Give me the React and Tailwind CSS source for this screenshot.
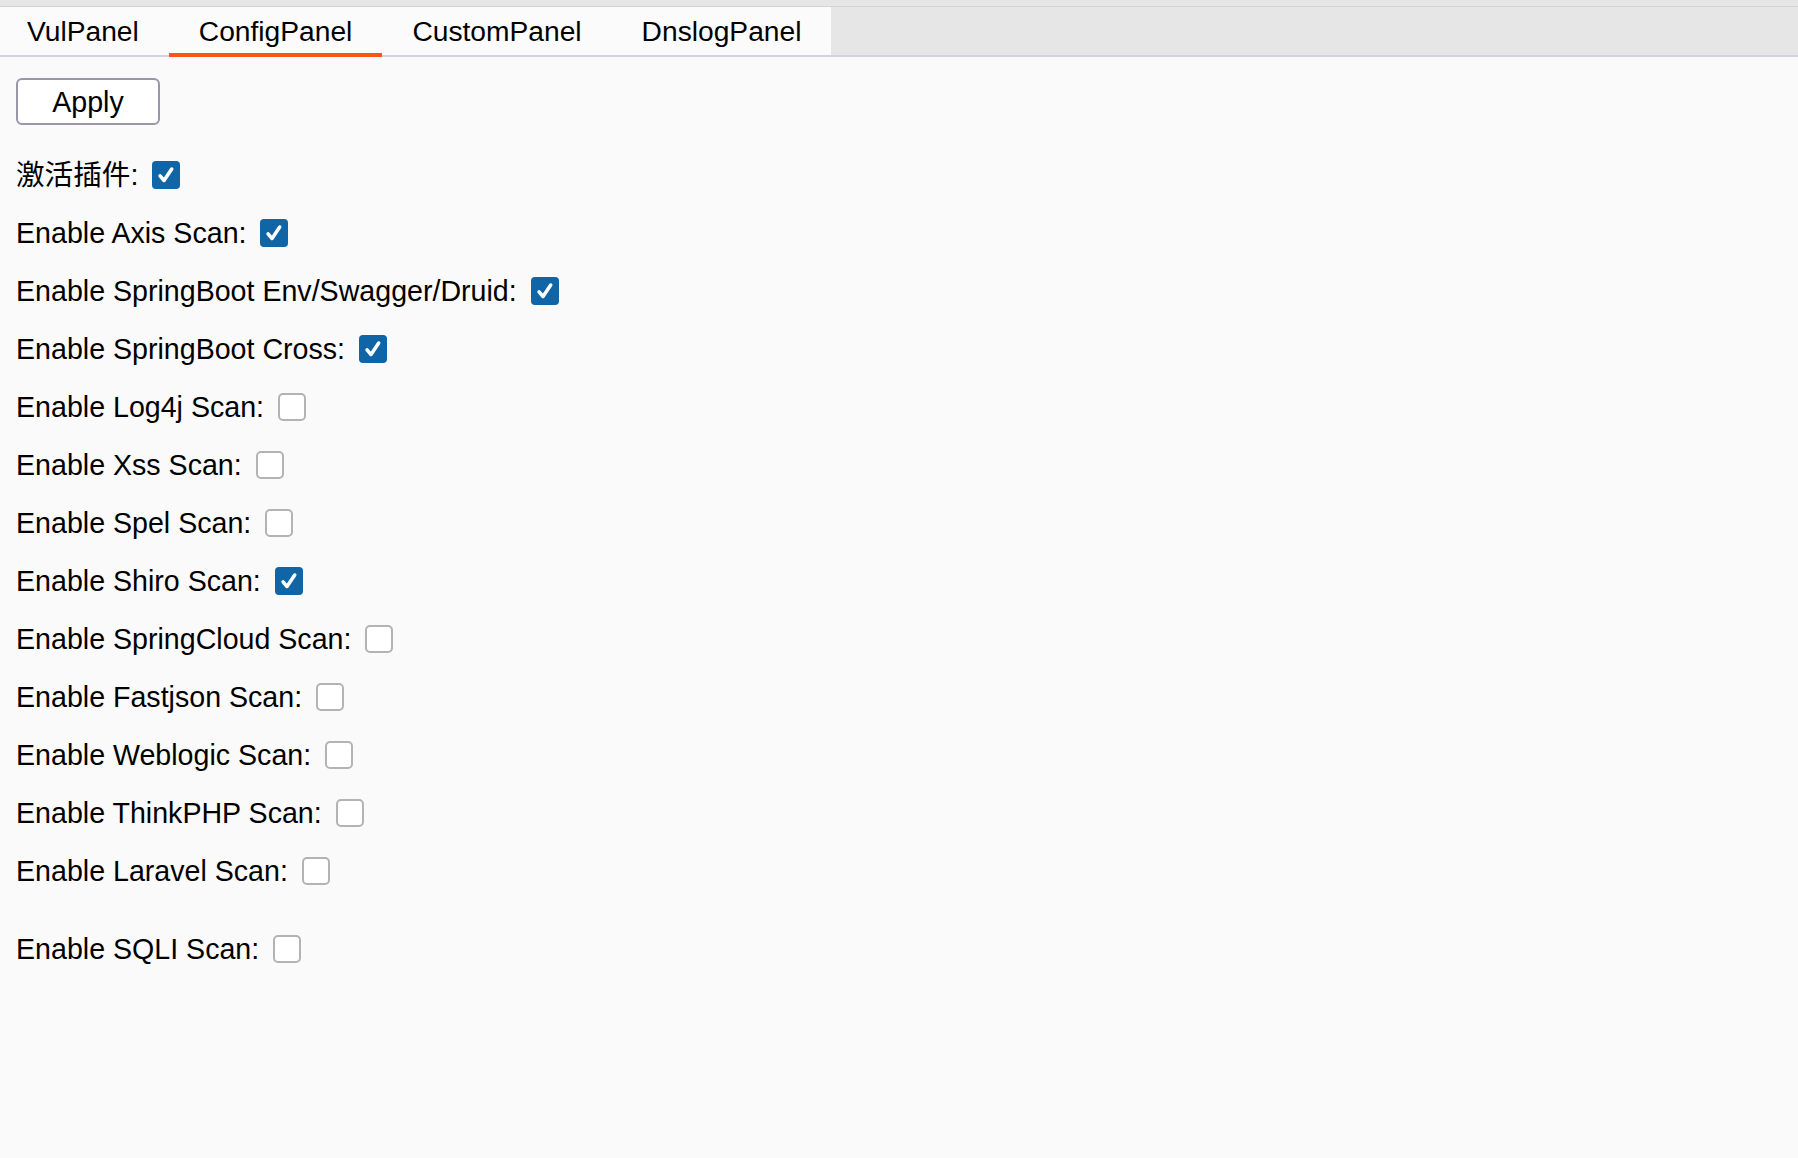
import React from "react";

const rows = [
  { label: "激活插件:", checked: true },
  { label: "Enable Axis Scan:", checked: true },
  { label: "Enable SpringBoot Env/Swagger/Druid:", checked: true },
  { label: "Enable SpringBoot Cross:", checked: true },
  { label: "Enable Log4j Scan:", checked: false },
  { label: "Enable Xss Scan:", checked: false },
  { label: "Enable Spel Scan:", checked: false },
  { label: "Enable Shiro Scan:", checked: true },
  { label: "Enable SpringCloud Scan:", checked: false },
  { label: "Enable Fastjson Scan:", checked: false },
  { label: "Enable Weblogic Scan:", checked: false },
  { label: "Enable ThinkPHP Scan:", checked: false },
  { label: "Enable Laravel Scan:", checked: false },
];

function Box({ checked }) {
  if (checked) {
    return (
      <span className="flex h-[28px] w-[28px] items-center justify-center rounded-[4px] bg-[#0f65a5]">
        <svg width="22" height="22" viewBox="0 0 20 20" fill="none">
          <path d="M4.6 10.8 L8.2 15 L15.2 4.6" stroke="white" strokeWidth="3.2" strokeLinecap="round" strokeLinejoin="round" />
        </svg>
      </span>
    );
  }
  return <span className="block h-[28px] w-[28px] rounded-[5px] border-2 border-[#b3b3b3] bg-white" />;
}

function Row({ label, checked, extra }) {
  return (
    <div className={`flex h-[58px] items-center gap-[14px] ${extra || ""}`}>
      <span className="text-[28.6px] leading-none text-black">{label}</span>
      <Box checked={checked} />
    </div>
  );
}

export default function App() {
  const tabs = ["VulPanel", "ConfigPanel", "CustomPanel", "DnslogPanel"];
  return (
    <div
      className="min-h-[1158px] w-full bg-[#fafafa]"
      style={{ fontFamily: '"Liberation Sans", Arial, "Noto Sans CJK SC", sans-serif' }}
    >
      <div className="bg-[#e6e6e6] pt-[6px]">
        <div className="flex border-t-[1.5px] border-b-2 border-[#d0d3d8]">
          <div className="flex bg-[#fbfbfb]">
            {tabs.map((t, i) => (
              <div
                key={t}
                className={`relative flex h-[48px] items-center px-[30px] text-[28.2px] text-black ${i === 0 ? "pl-[27px]" : ""}`}
              >
                {t}
                {i === 1 && (
                  <span className="absolute bottom-[-2px] left-0 right-0 h-[4px] bg-[#fa5417]" />
                )}
              </div>
            ))}
          </div>
          <div className="flex-1" />
        </div>
      </div>
      <div className="pl-[16px] pt-[21px]">
        <button className="flex h-[47px] w-[144px] items-center justify-center rounded-[6px] border-2 border-[#9896a8] bg-white pt-[1px] text-[28.6px] text-black">
          Apply
        </button>
        <div className="mt-[21px] flex flex-col">
          {rows.map((r) => (
            <Row key={r.label} label={r.label} checked={r.checked} />
          ))}
          <Row label="Enable SQLI Scan:" checked={false} extra="mt-[20px]" />
        </div>
      </div>
    </div>
  );
}
